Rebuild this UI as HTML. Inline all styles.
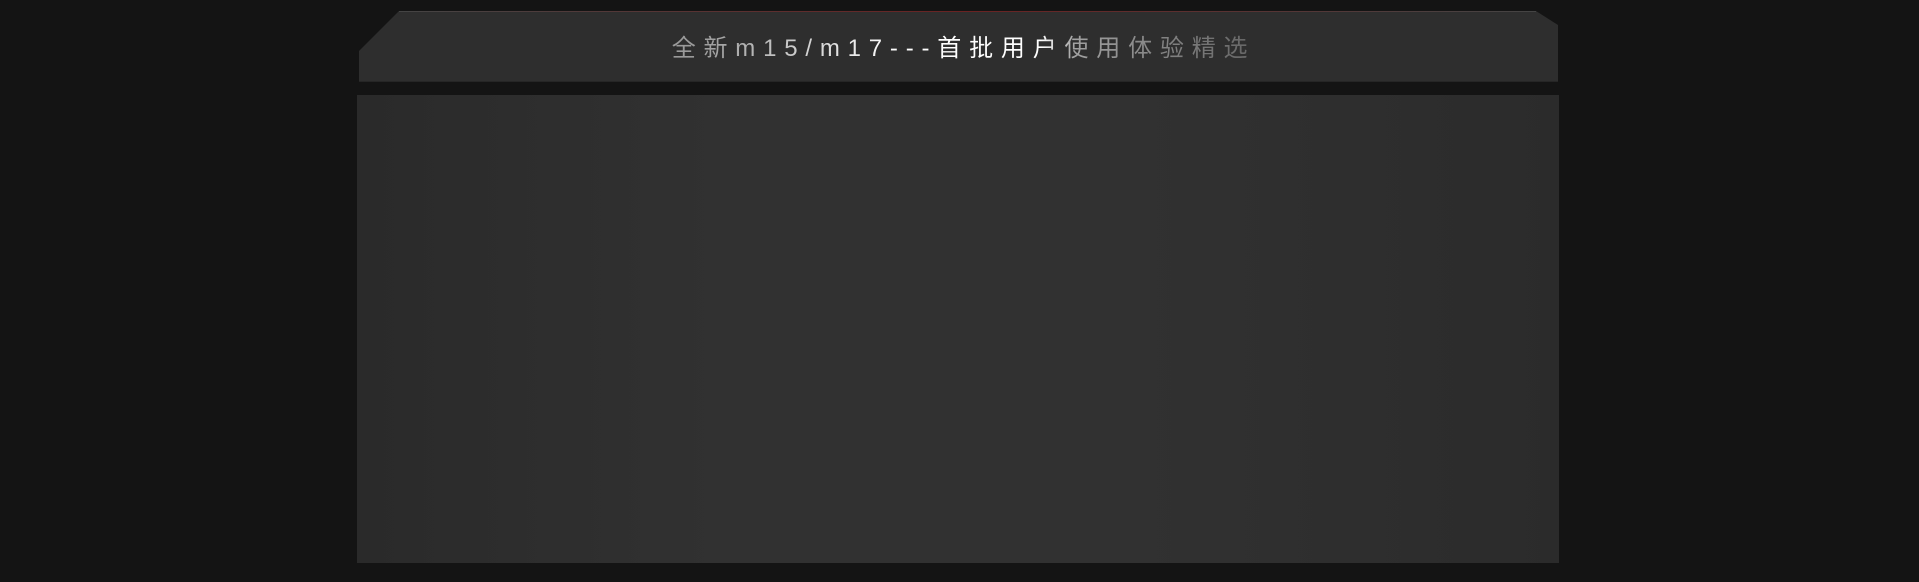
<!DOCTYPE html>
<html><head><meta charset="utf-8"><style>
html,body{margin:0;padding:0;background:#141414;width:1919px;height:582px;overflow:hidden}
.hdr{position:absolute;left:359px;top:11px;width:1199px;height:71px;background:#2e2e2e;
clip-path:polygon(40px 0,1177px 0,1199px 14px,1199px 71px,0 71px,0 40px);}
.hdr:before{content:"";position:absolute;left:40px;right:22px;top:0;height:1px;background:linear-gradient(90deg,#444,#6a2222 50%,#444)}
.hb{position:absolute;left:359px;top:81px;width:1199px;height:1px;background:#262626}
.t{position:absolute;left:0;width:1919px;top:28px;padding-left:8px;box-sizing:border-box;text-align:center;font:24px "Liberation Sans","Noto Sans CJK SC",sans-serif;letter-spacing:7.8px;
background:linear-gradient(90deg,#9a9a9a 700px,#e8e8e8 850px,#ffffff 900px,#ffffff 1040px,#a0a0a0 1075px,#666 1250px);-webkit-background-clip:text;background-clip:text;color:transparent}
.body{position:absolute;left:357px;top:95px;width:1202px;height:468px;
background:linear-gradient(90deg,#2a2a2a,#313131 30%,#313131 65%,#2b2b2b)}
</style></head><body>
<div class="hdr"></div><div class="hb"></div>
<div class="t">全新m15/m17---首批用户使用体验精选</div>
<div class="body"></div>
</body></html>
